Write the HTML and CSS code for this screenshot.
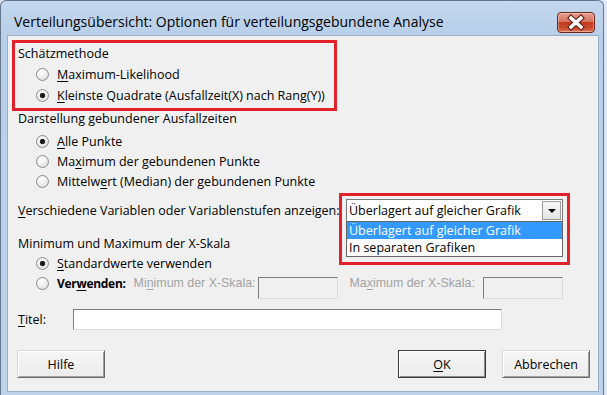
FILE: index.html
```html
<!DOCTYPE html>
<html lang="de">
<head>
    <meta charset="UTF-8">
    <meta name="viewport" content="width=device-width, initial-scale=1.0">
    <title>Verteilungsübersicht: Optionen</title>
    <link rel="stylesheet" href="styles.css">
</head>
<body>
<div class="window">
    <div class="titlebar">
        <div class="caption">Verteilungsübersicht: Optionen für verteilungsgebundene Analyse</div>
        <button class="close" aria-label="Schließen">
            <svg width="38" height="21" viewBox="0 0 38 21">
                <path d="M14 6 L24 15 M24 6 L14 15" stroke="#5b1a0f" stroke-width="5.5" stroke-linecap="square"/>
                <path d="M14 6 L24 15 M24 6 L14 15" stroke="#ffffff" stroke-width="3.4" stroke-linecap="square"/>
            </svg>
        </button>
    </div>

    <div class="client">
        <div class="group marked">
            <div class="head">Schätzmethode</div>
            <label class="radio"><span class="dot"></span><span><u>M</u>aximum-Likelihood</span></label>
            <label class="radio"><span class="dot on"></span><span><u>K</u>leinste Quadrate (Ausfallzeit(X) nach Rang(Y))</span></label>
        </div>

        <div class="group ties">
            <div class="head">Darstellung gebundener Ausfallzeiten</div>
            <label class="radio"><span class="dot on"></span><span><u>A</u>lle Punkte</span></label>
            <label class="radio"><span class="dot"></span><span>Ma<u>x</u>imum der gebundenen Punkte</span></label>
            <label class="radio"><span class="dot"></span><span>Mittelw<u>e</u>rt (Median) der gebundenen Punkte</span></label>
        </div>

        <div class="row show">
            <span class="lbl"><u>V</u>erschiedene Variablen oder Variablenstufen anzeigen:</span>
            <div class="combo">
                <span class="value">Überlagert auf gleicher Grafik</span>
                <span class="arrow"></span>
                <ul class="droplist">
                    <li class="sel">Überlagert auf gleicher Grafik</li>
                    <li>In separaten Grafiken</li>
                </ul>
            </div>
        </div>

        <div class="group scale">
            <div class="head">Minimum und Maximum der X-Skala</div>
            <label class="radio"><span class="dot on"></span><span><u>S</u>tandardwerte verwenden</span></label>
            <div class="xrow">
                <label class="radio"><span class="dot"></span><b>Ver<u>w</u>enden:</b></label>
                <span class="dis min">Mi<u>n</u>imum der X-Skala:</span>
                <span class="field off"></span>
                <span class="dis max">Ma<u>x</u>imum der X-Skala:</span>
                <span class="field off"></span>
            </div>
        </div>

        <div class="row title">
            <span class="lbl"><u>T</u>itel:</span>
            <span class="field wide"></span>
        </div>

        <div class="buttons">
            <button class="btn">Hilfe</button>
            <div class="spacer"></div>
            <button class="btn default"><u>O</u>K</button>
            <button class="btn">Abbrechen</button>
        </div>
    </div>
</div>
</body>
</html>
```

FILE: styles.css
```css
body {
    margin: 0;
    background: #dce7f3;
    font-family: 'Open Sans', 'Noto Sans', sans-serif;
    font-size: 12.5px;
    color: #000;
}
u { text-decoration-thickness: 1px; text-underline-offset: 2px; }

.window {
    width: 604px; height: 395px; box-sizing: border-box;
    border: 1px solid #66768a; border-bottom: none;
    border-radius: 6px 6px 0 0;
    background: linear-gradient(#c3d7ee, #b8cfe9 34px, #bed3ea);
    padding: 0 4px 3px 6px;
    display: flex; flex-direction: column;
}
.titlebar {
    height: 34px; flex-shrink: 0;
    display: flex; align-items: flex-start; justify-content: space-between;
}
.caption {
    font-size: 14px; line-height: 20px;
    padding: 11px 0 0 7px;
}
.close {
    margin: 11px 4px 0 0; padding: 0;
    width: 38px; height: 21px;
    border: 1px solid #6b2619; border-radius: 4px;
    background: linear-gradient(#e69a8a, #d4735e 45%, #c23a1f 50%, #cf5236 85%, #e0805e);
    box-shadow: inset 0 0 0 1px rgba(255,255,255,0.35);
    display: flex; align-items: center; justify-content: center;
}
.close svg { display: block; margin: -1px; }

.client {
    flex: 1;
    background: #f0f0f0;
    border: 1px solid #9aafc8;
    padding-left: 10px;
}

/* groups of radio buttons */
.head { height: 21px; line-height: 21px; white-space: nowrap; }
.radio {
    display: flex; align-items: center; gap: 8px;
    height: 21px; padding-left: 18px; white-space: nowrap;
}
.dot {
    width: 13px; height: 13px; box-sizing: border-box; flex-shrink: 0;
    border-radius: 50%;
    border: 1px solid #8b8d90;
    background: radial-gradient(circle at 40% 35%, #ffffff 0, #f4f4f4 35%, #d2d2d2 100%);
}
.dot.on {
    background:
        radial-gradient(circle at 50% 50%, #101010 0, #262626 2.3px, transparent 3.1px),
        radial-gradient(circle at 40% 35%, #ffffff 0, #f4f4f4 35%, #d2d2d2 100%);
}

.marked {
    margin: 7px 0 0 -3px; padding: 0 0 2px 3px;
    width: 319px; box-sizing: border-box;
    outline: 3px solid #e3212b;
}
.ties { margin-top: 1px; }
.ties .head { margin-top: 1px; height: 20px; line-height: 20px; margin-bottom: 2px; }
.ties .radio { height: 20px; }

/* combo box row */
.row { display: flex; align-items: center; }
.show { margin-top: 8px; height: 23px; }
.show .lbl { width: 328px; white-space: nowrap; }
.combo {
    position: relative;
    width: 217px; height: 23px; box-sizing: border-box;
    border: 1px solid #7a7a7a; background: #fff;
    display: flex; align-items: center;
}
.combo::after {
    content: ""; position: absolute;
    left: -8px; top: -7px; right: -8px; bottom: -44px;
    border: 3px solid #e3212b;
}
.value { padding-left: 2px; white-space: nowrap; }
.arrow {
    margin-left: auto; margin-right: 1px;
    width: 19px; height: 19px; box-sizing: border-box;
    border: 1px solid #9c9c9c;
    background: linear-gradient(#f7f7f7, #e3e3e3);
    display: flex; align-items: center; justify-content: center;
}
.arrow::before {
    content: ""; width: 0; height: 0;
    border-left: 4px solid transparent; border-right: 4px solid transparent;
    border-top: 4px solid #000;
}
.droplist {
    position: absolute; left: -1px; top: 100%;
    width: 217px; box-sizing: border-box;
    margin: 0; padding: 0; list-style: none;
    border: 1px solid #646464; background: #fff;
}
.droplist li { height: 17px; line-height: 17px; padding-left: 2px; white-space: nowrap; }
.droplist .sel { background: #3399ff; color: #fff; }

/* x-scale group */
.scale { margin-top: 12px; }
.scale .head { height: 19px; line-height: 19px; }
.scale .radio { height: 20px; }
.xrow { display: flex; align-items: flex-start; margin-top: 2px; height: 24px; }
.xrow .radio { height: 16px; }
.xrow b { font-size: 12px; letter-spacing: -0.3px; }
.dis {
    font-family: 'Liberation Sans', Arial, sans-serif; font-size: 12.4px;
    color: #a3a3a3; line-height: 16px; white-space: nowrap;
}
.dis.min { margin-left: 8px; margin-right: 2px; }
.dis.max { margin-left: 12px; margin-right: 8px; }
.field {
    display: block; box-sizing: border-box; height: 22px;
    border: 1px solid; border-color: #7d7d7d #dcdcdc #dcdcdc #7d7d7d;
    background: #fff;
}
.field.off { width: 80px; margin-top: 2px; background: #f0f0f0; }

.title { margin-top: 10px; height: 21px; }
.title .lbl { width: 55px; }
.field.wide { width: 429px; height: 21px; }

/* bottom buttons */
.buttons { display: flex; gap: 16px; margin-top: 20px; padding-right: 8px; }
.buttons .spacer { flex: 1; }
.btn {
    width: 88px; height: 28px; padding: 0;
    font-family: inherit; font-size: 12.5px; color: #000;
    background: linear-gradient(#f6f6f6, #ececec);
    border: 1px solid; border-color: #d9d9d9 #6a6a6a #6a6a6a #d9d9d9;
    box-shadow: inset 1px 1px 0 #ffffff, inset -1px -1px 0 #a0a0a0;
}
.buttons .btn:first-child { margin-left: -1px; }
.btn.default { border-color: #3a3a3a; box-shadow: inset 1px 1px 0 #ffffff, inset -1px -1px 0 #8a8a8a; }
```
